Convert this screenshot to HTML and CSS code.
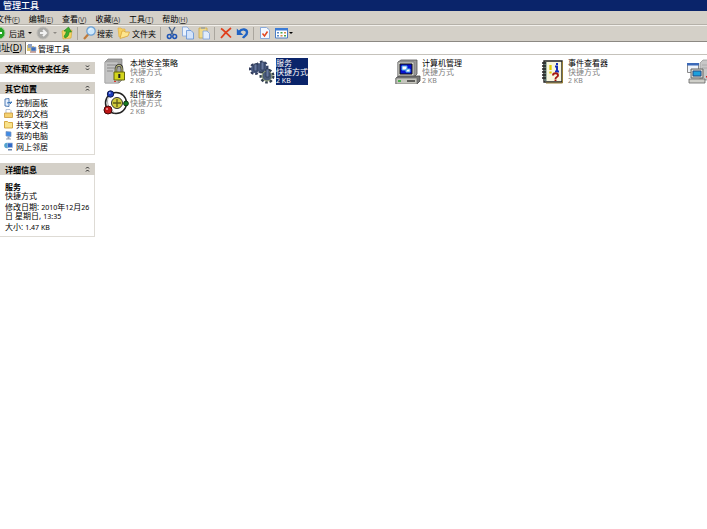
FILE: index.html
```html
<!DOCTYPE html>
<html lang="zh-CN">
<head>
    <meta charset="UTF-8">
    <meta name="viewport" content="width=device-width, initial-scale=1.0">
    <title>管理工具</title>
    <link rel="stylesheet" href="styles.css">
</head>
<body>
    <header class="titlebar"><h1>管理工具</h1></header>

    <nav class="menubar">
        <button>文件<small>(<u>F</u>)</small></button>
        <button>编辑<small>(<u>E</u>)</small></button>
        <button>查看<small>(<u>V</u>)</small></button>
        <button>收藏<small>(<u>A</u>)</small></button>
        <button>工具<small>(<u>T</u>)</small></button>
        <button>帮助<small>(<u>H</u>)</small></button>
    </nav>

    <div class="toolbar">
        <button class="back">
            <svg width="14" height="14" viewBox="0 0 14 14"><circle cx="7" cy="7" r="6" fill="#25a325" stroke="#9bcf8f"/><path d="M10 7H4M7 4L4 7l3 3" stroke="#fff" stroke-width="2" fill="none"/></svg>
            <span>后退</span>
            <i class="arrow"></i>
        </button>
        <button aria-label="前进">
            <svg width="14" height="14" viewBox="0 0 14 14"><circle cx="7" cy="7" r="6" fill="#a9a9a6" stroke="#bdbbb5"/><path d="M4 7h6M7 4l3 3-3 3" stroke="#f2f2f2" stroke-width="2" fill="none"/></svg>
            <i class="arrow dim"></i>
        </button>
        <button class="up" aria-label="向上">
            <svg width="12" height="14" viewBox="0 0 12 14"><path d="M1 5l4-1 1 1 5-1-1 8-8 1z" fill="#f4d565" stroke="#d7a93a" stroke-width=".7"/><path d="M4 12c3-1 4-3 4-6h2.500L7.500 1 3 5l2.300.3C5 8 4 9 3 10z" fill="#3dae2b" stroke="#1f7f1b" stroke-width=".6"/></svg>
        </button>
        <span class="sep"></span>
        <button class="search">
            <svg width="13" height="14" viewBox="0 0 13 14"><path d="M1 13l4.500-5" stroke="#c07b3c" stroke-width="2.200"/><circle cx="8" cy="5" r="4.200" fill="#cfe9fc" stroke="#6b9fd3" stroke-width="1.200"/><path d="M6 4.500c.4-1.200 1.400-1.800 2.500-1.600" stroke="#fff" fill="none"/></svg>
            <span>搜索</span>
        </button>
        <button class="folders">
            <svg width="13" height="14" viewBox="0 0 13 14"><path d="M1 2h3l1 1h3v8H2z" fill="#f7d160" stroke="#dfb04a" stroke-width=".7"/><path d="M3 12.500L5 5h2l1 1h4.500L11 10z" fill="#fde58e" stroke="#dba63a" stroke-width=".8"/></svg>
            <span>文件夹</span>
        </button>
        <span class="sep"></span>
        <button aria-label="剪切">
            <svg width="12" height="14" viewBox="0 0 12 14"><path d="M3 1l4.500 8M9 1L4.500 9" stroke="#49658c" stroke-width="1.400" fill="none"/><circle cx="3.300" cy="10.500" r="1.900" fill="none" stroke="#1f55b5" stroke-width="1.500"/><circle cx="8.700" cy="10.500" r="1.900" fill="none" stroke="#1f55b5" stroke-width="1.500"/></svg>
        </button>
        <button aria-label="复制">
            <svg width="12" height="14" viewBox="0 0 12 14"><path d="M.5 1h4.500l2 2v7H.5z" fill="#e8f1fd" stroke="#7da2dc" stroke-width=".8"/><path d="M4.500 4.500h4.500L11.500 7v6h-7z" fill="#d3e3fa" stroke="#5f8fd6" stroke-width=".8"/></svg>
        </button>
        <button aria-label="粘贴">
            <svg width="12" height="14" viewBox="0 0 12 14"><path d="M1 2h8v10H1z" fill="#f0d98a" stroke="#c6a448" stroke-width=".8"/><path d="M3 1h4v2H3z" fill="#a9a99b"/><path d="M5 5h4l2.500 2.500v5.500H5z" fill="#e1ecfb" stroke="#7da2dc" stroke-width=".8"/></svg>
        </button>
        <span class="sep"></span>
        <button aria-label="删除">
            <svg width="12" height="14" viewBox="0 0 12 14"><path d="M1 2.500c3 2 6 5 10 9M11 2C7 5 4 8 1 12" stroke="#e0401c" stroke-width="1.700" fill="none"/></svg>
        </button>
        <button aria-label="撤消">
            <svg width="13" height="14" viewBox="0 0 13 14"><path d="M3 6c3-4 8-3 8 .5 0 3-2.500 3-4 5.500" stroke="#1f63c4" stroke-width="2.400" fill="none"/><path d="M.8 2.500v6.500h6.500z" fill="#1f63c4"/></svg>
        </button>
        <span class="sep"></span>
        <button aria-label="属性">
            <svg width="12" height="14" viewBox="0 0 12 14"><path d="M1.500 1.500h6L10.500 4v8.500h-9z" fill="#f3f8ff" stroke="#7fa3d8" stroke-width=".9"/><path d="M3.500 7.500L5.500 10l3-4.500" stroke="#e3471f" stroke-width="1.500" fill="none"/></svg>
        </button>
        <button class="views" aria-label="查看">
            <svg width="13" height="14" viewBox="0 0 13 14"><path d="M.5 2.500h12v9.500H.5z" fill="#fff" stroke="#4a7dc4"/><path d="M0 2h13v2.500H0z" fill="#3b7bd6"/><path d="M2 6h2v1.500H2zM2 9h2v1.500H2z" fill="#5b88c6"/><path d="M5.500 6h2v1.500h-2zM9 9h2v1.500H9z" fill="#4ba54b"/><path d="M9 6h2v1.500H9zM5.500 9h2v1.500h-2z" fill="#d68b4c"/></svg>
            <i class="arrow"></i>
        </button>
    </div>

    <div class="address">
        <label for="path">地址(<u>D</u>)</label>
        <div class="field">
            <svg width="10" height="9" viewBox="0 0 10 9"><path d="M0 1h3l1 1h3v5H0z" fill="#dcc36e"/><path d="M1 0h4v4H1z" fill="#8d9fc3"/><path d="M4 3h5v4H4z" fill="#3c6fbd" stroke="#a8b2c5" stroke-width=".7"/><path d="M3 8h6" stroke="#9b5a4c"/></svg>
            <input id="path" type="text" value="管理工具">
        </div>
    </div>

    <div class="window">
        <aside class="sidebar">
            <section class="panel">
                <h2>文件和文件夹任务
                    <svg width="5" height="6" viewBox="0 0 5 6"><path d="M1 .500l1.500 1.500L4 .500M1 3.500L2.500 5 4 3.500" stroke="#222" fill="none"/></svg>
                </h2>
            </section>
            <section class="panel">
                <h2>其它位置
                    <svg width="5" height="6" viewBox="0 0 5 6"><path d="M1 2.500L2.500 1 4 2.500M1 5.500L2.500 4 4 5.500" stroke="#222" fill="none"/></svg>
                </h2>
                <ul class="places">
                    <li><a href="#"><svg width="9" height="9" viewBox="0 0 9 9"><path d="M1 1l4-.5v8L1 8z" fill="#e7f1ff" stroke="#416fac" stroke-width=".9"/><path d="M3 5l5-1-2 2" stroke="#3572b5" fill="none"/></svg>控制面板</a></li>
                    <li><a href="#"><svg width="9" height="9" viewBox="0 0 9 9"><path d="M2 .5h4l1 1V6H2z" fill="#fff" stroke="#9aabc5" stroke-width=".7"/><path d="M.5 4h8v4.500h-8z" fill="#f4d170" stroke="#c9973a" stroke-width=".8"/></svg>我的文档</a></li>
                    <li><a href="#"><svg width="9" height="9" viewBox="0 0 9 9"><path d="M.5 1.500h3l1 1h4v5.500h-8z" fill="#f9e28a" stroke="#cf9f36" stroke-width=".9"/></svg>共享文档</a></li>
                    <li><a href="#"><svg width="9" height="9" viewBox="0 0 9 9"><path d="M2 .5l5 .5v4.500L2 5z" fill="#3f8be6" stroke="#7b92b8" stroke-width=".7"/><path d="M3.500 5.500h2v2h-2zM2 7.500h5v1H2z" fill="#98a3b6"/></svg>我的电脑</a></li>
                    <li><a href="#"><svg width="9" height="9" viewBox="0 0 9 9"><circle cx="3" cy="3.500" r="2.800" fill="#54a5cf"/><path d="M3.500 1h5v4.500h-5z" fill="#3169c7" stroke="#a6bddd" stroke-width=".7"/><path d="M4 7h4v1.500H4z" fill="#6c86ad"/></svg>网上邻居</a></li>
                </ul>
            </section>
            <section class="panel">
                <h2>详细信息
                    <svg width="5" height="6" viewBox="0 0 5 6"><path d="M1 2.500L2.500 1 4 2.500M1 5.500L2.500 4 4 5.500" stroke="#222" fill="none"/></svg>
                </h2>
                <div class="details">
                    <p><b>服务</b><br>快捷方式</p>
                    <p>修改日期: <small>2010</small>年<small>12</small>月<small>26</small>日 星期日, <small>13:35</small></p>
                    <p>大小: <small>1.47 KB</small></p>
                </div>
            </section>
        </aside>

        <main class="files">
            <a class="file" href="#">
                <svg width="26" height="26" viewBox="0 0 26 26"><path d="M2 4l3-3h14v21l-3 3H2z" fill="#a5a5a5" stroke="#777" stroke-width=".7"/><path d="M2 4h13v21H2z" fill="#c4c4c4" stroke="#999" stroke-width=".5"/><path d="M4 7h9M4 10h9M4 13h6" stroke="#888"/><path d="M11 23h2v1h-2z" fill="#d33"/><path d="M13 15v-4c0-5 6-5 6 0v4" fill="none" stroke="#333" stroke-width="2.600"/><path d="M13 15v-4c0-5 6-5 6 0v4" fill="none" stroke="#d5d58a"/><path d="M11 14h10.500v8H11z" fill="#d3d51c" stroke="#66660c"/><path d="M15.300 16h2v4h-2z" fill="#222"/></svg>
                <span class="text"><strong>本地安全策略</strong><span>快捷方式</span><small>2 KB</small></span>
            </a>
            <a class="file selected" href="#">
                <svg width="26" height="26" viewBox="0 0 26 26"><g stroke-dasharray="2.500 1.700" fill="none" stroke-width="3"><circle cx="6" cy="11" r="4.500" stroke="#303a5a"/><circle cx="13" cy="9" r="5" stroke="#344264"/><circle cx="18" cy="18" r="6" stroke="#303d4e"/></g><circle cx="6" cy="11" r="4" fill="#46577d"/><circle cx="13" cy="9" r="4.500" fill="#46577d"/><circle cx="18" cy="18" r="5" fill="#4a5b78" stroke="#99a77c"/><path d="M5 6v7h3V6zM12 4v8h3V4zM17 11v8h3v-8z" fill="#6778a0" stroke="#26334f" stroke-width=".7"/></svg>
                <span class="text"><strong>服务</strong><span>快捷方式</span><small>2 KB</small></span>
            </a>
            <a class="file" href="#">
                <svg width="26" height="26" viewBox="0 0 26 26"><path d="M3 4l3-2h16v14l-3 3H3z" fill="#999" stroke="#555" stroke-width=".8"/><path d="M3 4h16v15H3z" fill="#d2d2ca" stroke="#777" stroke-width=".7"/><path d="M5 6h12v10H5z" fill="#0713d0" stroke="#111"/><path d="M7 8h5v4H7zM11 11h4v3h-4z" fill="#fff" stroke="#4aa5ea"/><path d="M1 20l3-2h21v5l-3 3H1z" fill="#777" stroke="#444" stroke-width=".8"/><path d="M1 20h21v6H1z" fill="#c5c5bd" stroke="#666" stroke-width=".7"/><path d="M3 23h3" stroke="#25a52a" stroke-width="1.500"/><path d="M12 23h8" stroke="#222" stroke-width="1.300"/></svg>
                <span class="text"><strong>计算机管理</strong><span>快捷方式</span><small>2 KB</small></span>
            </a>
            <a class="file" href="#">
                <svg width="26" height="26" viewBox="0 0 26 26"><path d="M3 3h18v21H3z" fill="#f8f6dd" stroke="#222" stroke-width="1.400"/><path d="M21.500 3.500V25H5" fill="none" stroke="#947d33"/><path d="M4.500 4v19" stroke="#5c7974" stroke-width="2"/><path d="M1 5h4M1 8h4M1 11h4M1 14h4M1 17h4M1 20h4" stroke="#222" stroke-width="1.300"/><path d="M9.500 7v5M9.500 13.500v2" stroke="#dfcb00" stroke-width="2.300"/><path d="M16 5v2M14 8.500h2V13M14 13.500h4" stroke="#1430bd" stroke-width="2" fill="none"/><path d="M12 17.500c0-3 5-3 5 0 0 2-2.500 1-2.500 3.500M14.500 21.500v1.500" stroke="#a51812" stroke-width="1.900" fill="none"/></svg>
                <span class="text"><strong>事件查看器</strong><span>快捷方式</span><small>2 KB</small></span>
            </a>
            <a class="file" href="#" aria-label="快捷方式">
                <svg width="26" height="26" viewBox="0 0 26 26"><path d="M13 5l3-3h10v20H13z" fill="#c7c7c7" stroke="#999" stroke-width=".8"/><path d="M15 7h11M15 10h11" stroke="#aaa"/><path d="M.5 5.500h11v9H.5z" fill="#eef3fa" stroke="#888"/><path d="M0 5h12v2.500H0z" fill="#3b69b8"/><path d="M4 11h12v9H4z" fill="#d5d5ce" stroke="#666"/><path d="M6 13h8v5H6z" fill="#1da0dd" stroke="#234b83"/><path d="M2 21h16v4H2z" fill="#cfcfc9" stroke="#666" stroke-width=".8"/><path d="M19 18h1.500v1.500H19z" fill="#d22"/></svg>
            </a>
            <a class="file" href="#">
                <svg width="26" height="26" viewBox="0 0 26 26"><circle cx="13" cy="14" r="10.500" fill="none" stroke="#222" stroke-width="1.500"/><path d="M7 5c-5 7-2 15 5 19" fill="none" stroke="#aaa"/><circle cx="14" cy="14" r="5.500" fill="#d2cc3c" stroke="#333"/><path d="M14 10v8M10 14h8" stroke="#5f5b17" stroke-width="1.300"/><circle cx="7.500" cy="5" r="3.200" fill="#1d3bb7" stroke="#101c4d"/><circle cx="5" cy="21" r="4" fill="#bd1515" stroke="#420b0b"/><circle cx="23" cy="14.500" r="2.400" fill="#167d24" stroke="#0b3210"/><circle cx="6.800" cy="4" r=".9" fill="#9fb3f5"/><circle cx="4" cy="20" r="1.100" fill="#f49a9a"/></svg>
                <span class="text"><strong>组件服务</strong><span>快捷方式</span><small>2 KB</small></span>
            </a>
        </main>
    </div>
</body>
</html>
```
FILE: styles.css
```css
* {
    margin: 0;
    padding: 0;
    box-sizing: border-box;
}
body {
    display: flex;
    flex-direction: column;
    min-height: 100vh;
    overflow: hidden;
    background: #fff;
    color: #000;
    font: 8px/9px "Noto Sans", "Noto Sans CJK SC", sans-serif;
}
button, input {
    border: 0;
    background: none;
    font: inherit;
    color: inherit;
}
a {
    color: inherit;
    text-decoration: none;
}
small {
    font-size: 7px;
    line-height: 7px;
}
svg {
    display: block;
    flex: none;
}

.titlebar {
    height: 11px;
    padding-left: 3px;
    background: #0a246a;
    color: #fff;
}
.titlebar h1 {
    font-size: 9px;
    line-height: 11px;
    font-weight: 500;
}

.menubar {
    display: flex;
    gap: 9px;
    height: 14px;
    margin-left: -4px;
    padding-top: 1px;
    align-items: center;
    background: #d4d0c8;
    border-bottom: 1px solid #b5b1a9;
}
.menubar small {
    color: #444;
}

.toolbar {
    display: flex;
    align-items: center;
    gap: 4px;
    height: 17px;
    margin-left: -8px;
    padding-bottom: 1px;
    background: #d4d0c8;
    border-top: 1px solid #f2f0ec;
    border-bottom: 1px solid #8c8983;
}
.toolbar button {
    display: flex;
    align-items: center;
    gap: 3px;
}
.toolbar .search, .toolbar .views {
    gap: 1px;
}
.toolbar .folders {
    gap: 2px;
}
.arrow {
    border: 2px solid transparent;
    border-top-color: #000;
    border-bottom: 0;
}
.arrow.dim {
    border-top-color: #8d8a84;
}
.sep {
    width: 1px;
    height: 13px;
    margin-right: 1px;
    background: #aaa69e;
}

.address {
    display: flex;
    height: 13px;
    background: #d4d0c8;
    border-bottom: 1px solid #c5c2bb;
}
.address label {
    margin-left: -8px;
    padding-right: 3px;
    font-size: 9px;
    line-height: 12px;
}
.field {
    display: flex;
    flex: 1;
    align-items: center;
    gap: 1px;
    padding-left: 1px;
    background: #fff;
    border-left: 1px solid #77746e;
}
.field input {
    flex: 1;
    height: 11px;
}

.window {
    display: flex;
    flex: 1;
}
.sidebar {
    display: flex;
    flex-direction: column;
    gap: 8px;
    width: 95px;
    flex: none;
    padding-top: 7px;
}
.panel h2 {
    display: flex;
    align-items: center;
    justify-content: space-between;
    height: 12px;
    padding: 0 5px;
    background: #d4d0c8;
    font-size: 8px;
}
.places, .details {
    border: 1px solid #dedbd5;
    border-width: 0 1px 1px 0;
}
.places {
    list-style: none;
    padding: 3px 4px 2px;
}
.places a {
    display: flex;
    align-items: center;
    gap: 3px;
    height: 11px;
}
.details {
    padding: 7px 3px 5px 5px;
}
.details p + p {
    margin-top: 2px;
}

.files {
    display: grid;
    flex: 1;
    min-width: 0;
    grid-template-columns: repeat(5, 146px);
    grid-auto-rows: 26px;
    gap: 5px 0;
    align-content: start;
    padding: 3px 0 0 8px;
    overflow: hidden;
}
.file {
    display: flex;
    align-items: flex-start;
    gap: 1px;
}
.text {
    display: flex;
    flex-direction: column;
    color: #808080;
}
.text strong {
    color: #000;
    font-weight: 400;
}
.text small {
    line-height: 9px;
}
.selected .text, .selected strong {
    background: #0a246a;
    color: #fff;
}
```
